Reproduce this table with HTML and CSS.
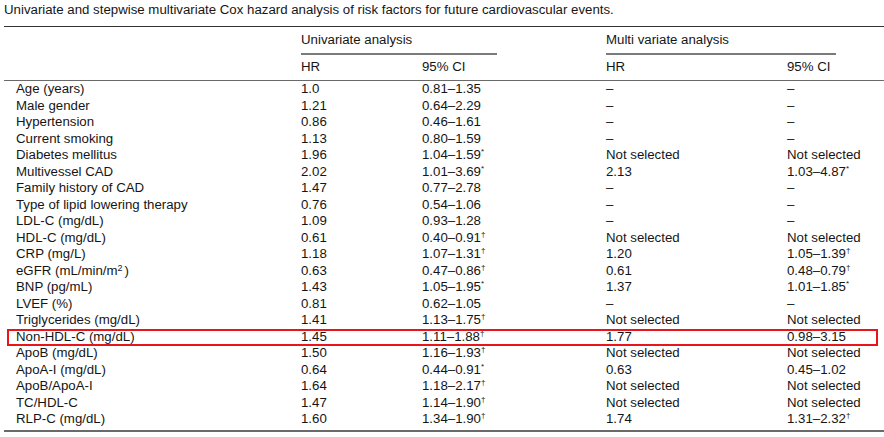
FILE: index.html
```html
<!DOCTYPE html>
<html lang="en">
<head>
<meta charset="utf-8">
<link rel="stylesheet" href="styles.css">
</head>
<body>
<div class="page">
  <p class="caption">Univariate and stepwise multivariate Cox hazard analysis of risk factors for future cardiovascular events.</p>
  <div class="table">
    <div class="head">
      <div class="row group-row">
        <div class="blank"></div>
        <div class="group uni"><span>Univariate analysis</span></div>
        <div class="group multi"><span>Multi variate analysis</span></div>
      </div>
      <div class="row sub-row">
        <div class="blank"></div>
        <div>HR</div>
        <div>95% CI</div>
        <div>HR</div>
        <div>95% CI</div>
      </div>
    </div>
    <div class="body">
      <div class="row"><div class="label">Age (years)</div><div>1.0</div><div>0.81–1.35</div><div>–</div><div>–</div></div>
      <div class="row"><div class="label">Male gender</div><div>1.21</div><div>0.64–2.29</div><div>–</div><div>–</div></div>
      <div class="row"><div class="label">Hypertension</div><div>0.86</div><div>0.46–1.61</div><div>–</div><div>–</div></div>
      <div class="row"><div class="label">Current smoking</div><div>1.13</div><div>0.80–1.59</div><div>–</div><div>–</div></div>
      <div class="row"><div class="label">Diabetes mellitus</div><div>1.96</div><div>1.04–1.59<sup>*</sup></div><div>Not selected</div><div>Not selected</div></div>
      <div class="row"><div class="label">Multivessel CAD</div><div>2.02</div><div>1.01–3.69<sup>*</sup></div><div>2.13</div><div>1.03–4.87<sup>*</sup></div></div>
      <div class="row"><div class="label">Family history of CAD</div><div>1.47</div><div>0.77–2.78</div><div>–</div><div>–</div></div>
      <div class="row"><div class="label">Type of lipid lowering therapy</div><div>0.76</div><div>0.54–1.06</div><div>–</div><div>–</div></div>
      <div class="row"><div class="label">LDL-C (mg/dL)</div><div>1.09</div><div>0.93–1.28</div><div>–</div><div>–</div></div>
      <div class="row"><div class="label">HDL-C (mg/dL)</div><div>0.61</div><div>0.40–0.91<sup>†</sup></div><div>Not selected</div><div>Not selected</div></div>
      <div class="row"><div class="label">CRP (mg/L)</div><div>1.18</div><div>1.07–1.31<sup>†</sup></div><div>1.20</div><div>1.05–1.39<sup>†</sup></div></div>
      <div class="row"><div class="label">eGFR (mL/min/m<sup class="sq">2</sup>)</div><div>0.63</div><div>0.47–0.86<sup>†</sup></div><div>0.61</div><div>0.48–0.79<sup>†</sup></div></div>
      <div class="row"><div class="label">BNP (pg/mL)</div><div>1.43</div><div>1.05–1.95<sup>*</sup></div><div>1.37</div><div>1.01–1.85<sup>*</sup></div></div>
      <div class="row"><div class="label">LVEF (%)</div><div>0.81</div><div>0.62–1.05</div><div>–</div><div>–</div></div>
      <div class="row"><div class="label">Triglycerides (mg/dL)</div><div>1.41</div><div>1.13–1.75<sup>†</sup></div><div>Not selected</div><div>Not selected</div></div>
      <div class="row highlight"><div class="label">Non-HDL-C (mg/dL)</div><div>1.45</div><div>1.11–1.88<sup>†</sup></div><div>1.77</div><div>0.98–3.15</div></div>
      <div class="row"><div class="label">ApoB (mg/dL)</div><div>1.50</div><div>1.16–1.93<sup>†</sup></div><div>Not selected</div><div>Not selected</div></div>
      <div class="row"><div class="label">ApoA-I (mg/dL)</div><div>0.64</div><div>0.44–0.91<sup>*</sup></div><div>0.63</div><div>0.45–1.02</div></div>
      <div class="row"><div class="label">ApoB/ApoA-I</div><div>1.64</div><div>1.18–2.17<sup>†</sup></div><div>Not selected</div><div>Not selected</div></div>
      <div class="row"><div class="label">TC/HDL-C</div><div>1.47</div><div>1.14–1.90<sup>†</sup></div><div>Not selected</div><div>Not selected</div></div>
      <div class="row"><div class="label">RLP-C (mg/dL)</div><div>1.60</div><div>1.34–1.90<sup>†</sup></div><div>1.74</div><div>1.31–2.32<sup>†</sup></div></div>
    </div>
  </div>
</div>
</body>
</html>
```

FILE: styles.css
```css
html, body {
  margin: 0;
  padding: 0;
  background: #ffffff;
}

.page {
  width: 884px;
  height: 437px;
  padding-left: 4px;
  box-sizing: border-box;
  font-family: "Liberation Sans", Arial, sans-serif;
  font-size: 13.25px;
  color: #151515;
  overflow: hidden;
}

.caption {
  margin: 0;
  padding-top: 2px;
  height: 26px;
  line-height: 16px;
  box-sizing: border-box;
  white-space: nowrap;
}

.table {
  border-top: 1px solid #333;
  border-bottom: 2px solid #6a6a6a;
}

.row {
  display: grid;
  grid-template-columns: 297px 121px 184px 181px 97px;
  line-height: 16.5px;
  position: relative;
  white-space: nowrap;
}

.head {
  border-bottom: 1px solid #6a6a6a;
}

.group-row {
  padding-top: 5px;
  line-height: 16px;
}

.group span {
  display: block;
  padding-bottom: 5px;
  border-bottom: 2px solid #7a7a7a;
}

.uni {
  grid-column: 2 / 4;
}

.uni span {
  width: 196px;
}

.multi {
  grid-column: 4 / 6;
}

.multi span {
  width: 230px;
}

.sub-row {
  padding-top: 4px;
  padding-bottom: 5px;
  line-height: 16px;
}

.body {
  padding-top: 0;
  padding-bottom: 2px;
}

.label {
  padding-left: 12px;
}

sup {
  font-size: 8px;
  line-height: 0;
  vertical-align: 5px;
}

sup.sq {
  font-size: 9px;
  vertical-align: 4px;
  padding-right: 2px;
}

.highlight::after {
  content: "";
  position: absolute;
  left: 3px;
  right: 6px;
  top: 0;
  bottom: -1px;
  border: 2px solid #e8151b;
}
```
